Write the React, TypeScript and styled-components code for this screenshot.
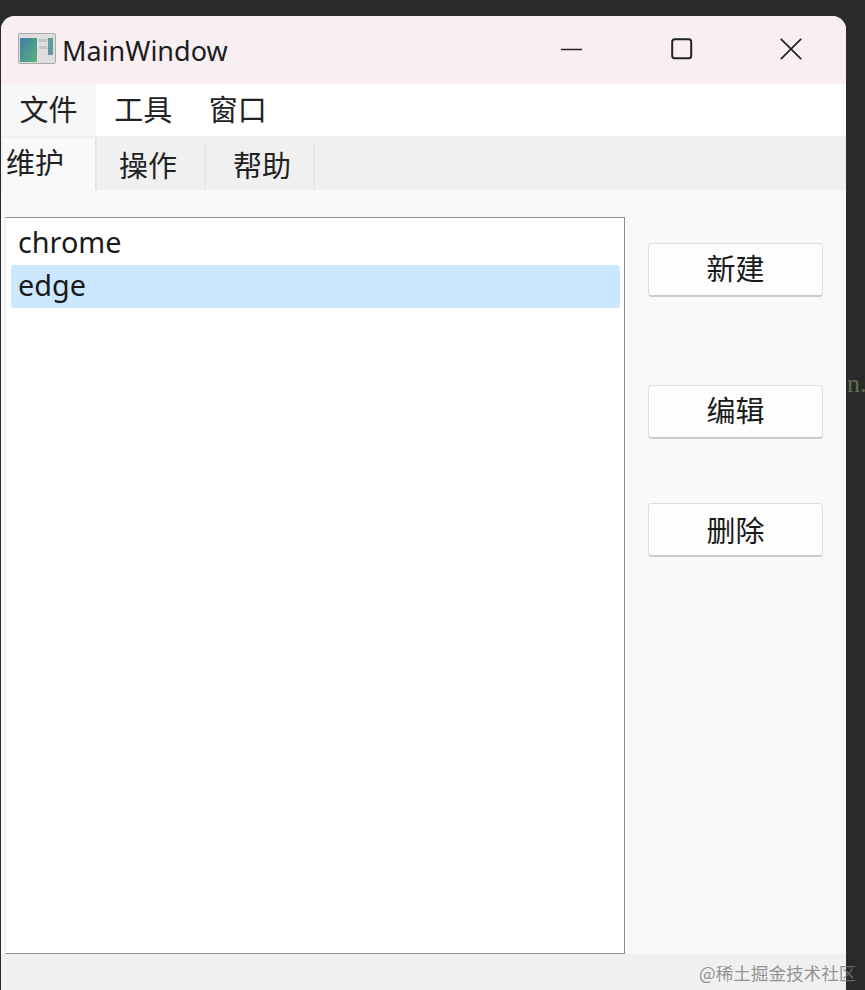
import React, { FC } from 'react';

import styled, { createGlobalStyle } from 'styled-components';

const CJK = `'Noto Sans CJK SC', 'Noto Sans', sans-serif`;
const LATIN = `'Noto Sans', 'Noto Sans CJK SC', sans-serif`;

const GlobalStyle = createGlobalStyle`
  html, body {
    margin: 0;
    padding: 0;
    background: #2a2a2a;
    overflow: hidden;
  }
`;

const Page = styled.div`
  position: relative;
  width: 865px;
  height: 990px;
  box-sizing: border-box;
  padding: 16px 0 0 1px;
  display: flex;
  background: #2a2a2a;
`;

const Window = styled.div`
  width: 845px;
  height: 974px;
  display: flex;
  flex-direction: column;
  border-radius: 14px 14px 0 0;
  overflow: hidden;
  background: #f9f9f9;
  color: #1a1a1a;
`;

const TitleBar = styled.div`
  height: 68px;
  flex: none;
  display: flex;
  align-items: center;
  background: #f9eff3;
  padding-left: 17px;
`;

const AppIcon = styled.svg`
  width: 38px;
  height: 31px;
  margin: 0 7px 4px 0;
  flex: none;
`;

const WindowTitle = styled.div`
  font: 400 27px ${LATIN};
  margin-left: -1px;
  color: #1c1c1c;
`;

const WindowControls = styled.div`
  margin-left: auto;
  display: flex;
  align-items: center;
  gap: 87.5px;
  padding-right: 44px;
  padding-bottom: 2px;
`;

const ControlIcon = styled.svg`
  width: 22px;
  height: 22px;
  display: block;
`;

const MenuBar = styled.div`
  height: 52px;
  flex: none;
  display: flex;
  background: #ffffff;
`;

const MenuItem = styled.div<{ active?: boolean }>`
  width: ${({ active }) => (active ? '95px' : '94.5px')};
  display: flex;
  align-items: center;
  justify-content: center;
  padding-bottom: 5px;
  box-sizing: border-box;
  font: 400 29px ${CJK};
  line-height: 44px;
  background: ${({ active }) => (active ? '#f7f7f7' : 'transparent')};
  color: #222;
`;

const TabBar = styled.div`
  height: 54px;
  flex: none;
  display: flex;
  align-items: flex-end;
  background: #f0f0f0;
  padding-left: 2px;
`;

const Tab = styled.div<{ selected?: boolean; textOffset?: number }>`
  box-sizing: border-box;
  width: ${({ selected }) => (selected ? '94px' : '109px')};
  height: ${({ selected }) => (selected ? '52px' : '47px')};
  display: flex;
  align-items: center;
  padding-left: ${({ textOffset }) => textOffset ?? 0}px;
  padding-bottom: ${({ selected }) => (selected ? '7px' : '6px')};
  font: 400 29px ${CJK};
  background: ${({ selected }) => (selected ? '#f9f9f9' : '#f0f0f0')};
  border-right: 2px solid ${({ selected }) => (selected ? '#e4e4e4' : '#e8e8e8')};
  color: #222;
`;

const Content = styled.div`
  flex: 1;
  min-height: 0;
  display: flex;
  padding: 27px 23px 0 4px;
  gap: 23px;
`;

const ListBox = styled.div`
  width: 620px;
  box-sizing: border-box;
  background: #ffffff;
  border: 1px solid #8e8e8e;
  border-left-color: #ececec;
  border-bottom-width: 1.5px;
  padding: 4px 4px 0 5px;
  display: flex;
  flex-direction: column;
`;

const ListRow = styled.div<{ selected?: boolean }>`
  height: 43px;
  box-sizing: border-box;
  display: flex;
  align-items: center;
  padding: 0 0 4px 7px;
  font: 400 28.8px ${LATIN};
  color: #1a1a1a;
  border-radius: 3px;
  background: ${({ selected }) => (selected ? '#cce8ff' : 'transparent')};
`;

const ButtonColumn = styled.div`
  display: flex;
  flex-direction: column;
  padding-top: 26px;
`;

const ActionButton = styled.button<{ gap: number; lift: number }>`
  width: 175px;
  height: 54px;
  margin-bottom: ${({ gap }) => gap}px;
  padding: 0 0 ${({ lift }) => lift}px;
  box-sizing: border-box;
  background: #fdfdfd;
  border: 1px solid #dedede;
  border-bottom: 2px solid #cacaca;
  border-radius: 4px;
  font: 400 29px ${CJK};
  color: #1a1a1a;
`;

const StatusBar = styled.div`
  height: 36px;
  flex: none;
  background: #f0f0f0;
`;

const Backdrop = styled.div`
  flex: 1;
  overflow: hidden;
  padding: 353px 0 0 1px;
  font: 400 26px 'Liberation Serif', serif;
  color: #5f6f52;
  white-space: nowrap;
`;

const Watermark = styled.div`
  position: absolute;
  left: 699px;
  top: 960px;
  font: 400 17.6px ${CJK};
  color: rgba(120, 120, 120, 0.8);
  white-space: nowrap;
`;

const ACTIONS = [
  { label: '新建', gap: 88, lift: 6 },
  { label: '编辑', gap: 64, lift: 6 },
  { label: '删除', gap: 0, lift: 2 },
];

const App: FC = () => (
  <>
    <GlobalStyle />
    <Page>
      <Window>
        <TitleBar>
          <AppIcon viewBox="0 0 38 31">
            <defs>
              <linearGradient id="pane" x1="0" y1="0" x2="1" y2="1">
                <stop offset="0" stopColor="#3f7fa6" />
                <stop offset="1" stopColor="#5bb07a" />
              </linearGradient>
            </defs>
            <rect x="0.5" y="0.5" width="37" height="30" rx="1.5" fill="#dedede" stroke="#aaaaaa" />
            <rect x="2" y="5" width="17" height="24" fill="url(#pane)" />
            <rect x="21" y="6" width="8" height="3" fill="#bcc8c8" />
            <rect x="21" y="13" width="8" height="3" fill="#c4c4c4" />
            <rect x="30" y="5" width="5" height="17" fill="#5f9aa0" />
          </AppIcon>
          <WindowTitle>MainWindow</WindowTitle>
          <WindowControls>
            <ControlIcon viewBox="0 0 22 22">
              <path d="M0 11.5H21" stroke="#222" strokeWidth="1.4" fill="none" />
            </ControlIcon>
            <ControlIcon viewBox="0 0 22 22">
              <rect x="1.2" y="1.2" width="19" height="19" rx="2.5" stroke="#222" strokeWidth="2" fill="none" />
            </ControlIcon>
            <ControlIcon viewBox="0 0 22 22">
              <path d="M0.8 0.8L21.2 21.2M21.2 0.8L0.8 21.2" stroke="#222" strokeWidth="1.7" fill="none" />
            </ControlIcon>
          </WindowControls>
        </TitleBar>
        <MenuBar>
          <MenuItem active>文件</MenuItem>
          <MenuItem>工具</MenuItem>
          <MenuItem>窗口</MenuItem>
        </MenuBar>
        <TabBar>
          <Tab selected textOffset={3}>维护</Tab>
          <Tab textOffset={22}>操作</Tab>
          <Tab textOffset={27}>帮助</Tab>
        </TabBar>
        <Content>
          <ListBox>
            <ListRow>chrome</ListRow>
            <ListRow selected>edge</ListRow>
          </ListBox>
          <ButtonColumn>
            {ACTIONS.map(({ label, gap, lift }) => (
              <ActionButton key={label} gap={gap} lift={lift}>
                {label}
              </ActionButton>
            ))}
          </ButtonColumn>
        </Content>
        <StatusBar />
      </Window>
      <Backdrop>n.</Backdrop>
      <Watermark>@稀土掘金技术社区</Watermark>
    </Page>
  </>
);

export default App;
